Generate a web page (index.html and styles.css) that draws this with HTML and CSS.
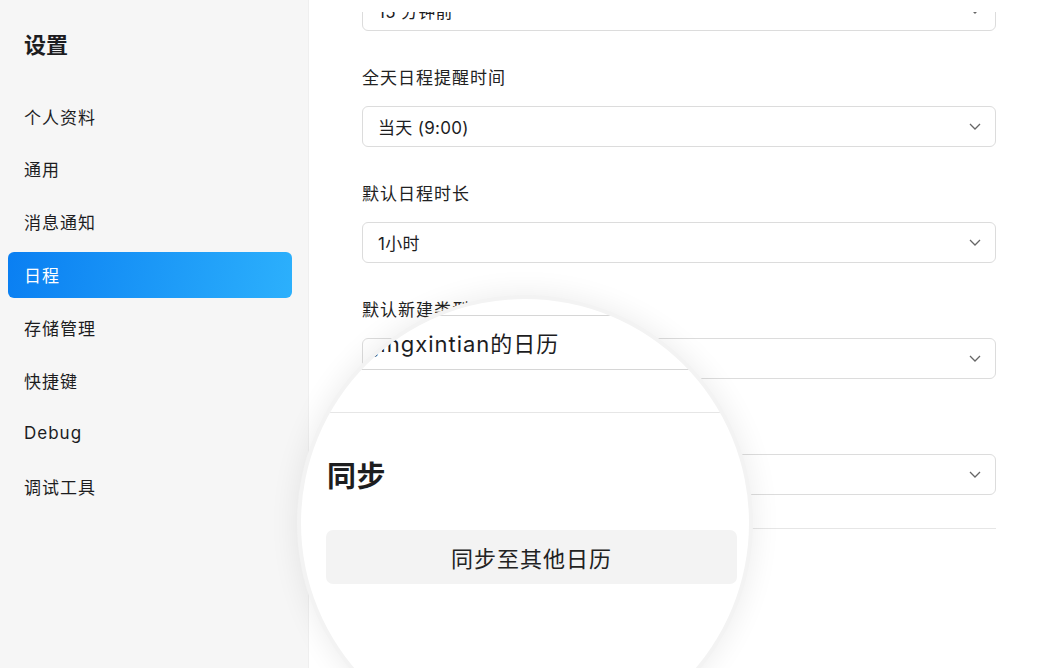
FILE: index.html
```html
<!DOCTYPE html>
<html lang="zh-CN">
<head>
  <meta charset="UTF-8" />
  <meta name="viewport" content="width=device-width, initial-scale=1.0" />
  <title>设置</title>
  <link rel="stylesheet" href="styles.css">
</head>
<body>
  <div class="app">
    <div class="sidebar">
      <h2>设置</h2>
      <a class="nav-item">个人资料</a>
      <a class="nav-item">通用</a>
      <a class="nav-item">消息通知</a>
      <a class="nav-item active">日程</a>
      <a class="nav-item">存储管理</a>
      <a class="nav-item">快捷键</a>
      <a class="nav-item">Debug</a>
      <a class="nav-item">调试工具</a>
    </div>

    <div class="content">
      <div class="titlebar"></div>
      <div class="field first">
        <div class="select"><span>15 分钟前</span><svg viewBox="0 0 12 7"><path d="M1 1l5 5 5-5"/></svg></div>
      </div>
      <div class="field">
        <label>全天日程提醒时间</label>
        <div class="select"><span>当天 (9:00)</span><svg viewBox="0 0 12 7"><path d="M1 1l5 5 5-5"/></svg></div>
      </div>
      <div class="field">
        <label>默认日程时长</label>
        <div class="select"><span>1小时</span><svg viewBox="0 0 12 7"><path d="M1 1l5 5 5-5"/></svg></div>
      </div>
      <div class="field">
        <label>默认新建类型</label>
        <div class="select"><span>jingxintian的日历</span><svg viewBox="0 0 12 7"><path d="M1 1l5 5 5-5"/></svg></div>
      </div>
      <div class="field">
        <label>默认日历</label>
        <div class="select"><span>jingxintian的日历</span><svg viewBox="0 0 12 7"><path d="M1 1l5 5 5-5"/></svg></div>
      </div>
      <div class="divider"></div>
    </div>
  </div>

  <!-- Lupe über dem Inhalt -->
  <div class="lens">
    <div class="lens-content">
      <div class="lens-select">jingxintian的日历</div>
      <div class="lens-divider"></div>
      <h3>同步</h3>
      <button class="lens-button">同步至其他日历</button>
    </div>
  </div>
</body>
</html>
```

FILE: styles.css
```css
body {
  margin: 0;
  padding: 0;
  font-family: 'Inter', 'Noto Sans CJK SC', sans-serif;
  color: #1d1d1f;
  background: #fff;
  height: 668px;
  overflow: hidden;
}

.app {
  display: flex;
  height: 100%;
}

/* Seitenleiste */
.sidebar {
  width: 284px;
  flex-shrink: 0;
  background: #f6f6f6;
  padding: 0 16px 0 8px;
  border-right: 1px solid #efefef;
}

.sidebar h2 {
  margin: 29px 0 32px 16px;
  font-size: 22px;
  line-height: 32px;
  font-weight: 700;
  color: #1d1d1f;
}

.nav-item {
  display: flex;
  align-items: center;
  height: 46px;
  margin-bottom: 6.86px;
  padding-left: 16px;
  font-size: 17px;
  letter-spacing: 1px;
  color: #1d1d1f;
  border-radius: 6px;
}

.nav-item.active {
  background: linear-gradient(100deg, #0a7ff2, #2cb0fc);
  color: #fff;
}

/* Inhalt */
.content {
  flex: 1;
  padding: 0 53px;
}

/* Streifen oben, unter dem der Inhalt verschwindet */
.titlebar {
  position: fixed;
  top: 0;
  left: 309px;
  right: 0;
  height: 12px;
  background: #fff;
  z-index: 5;
}

.field {
  margin-bottom: 36px;
}

.field.first {
  margin-top: -10px;
}

.field label {
  display: block;
  font-size: 17px;
  letter-spacing: 1px;
  line-height: 22px;
  color: #222;
  margin-bottom: 17px;
}

.select {
  height: 39px;
  border: 1px solid #dcdcdc;
  border-radius: 6px;
  display: flex;
  align-items: center;
  justify-content: space-between;
  padding: 0 14px 0 15px;
  font-size: 17px;
  letter-spacing: 0.3px;
  color: #1d1d1f;
}

.select svg {
  width: 12px;
  height: 7px;
  fill: none;
  stroke: #666;
  stroke-width: 1.3;
}

.divider {
  height: 1px;
  background: #e6e6e6;
  margin-top: -3px;
}

/* Lupe */
.lens {
  position: absolute;
  left: 301px;
  top: 299px;
  width: 448px;
  height: 448px;
  border-radius: 50%;
  overflow: hidden;
  background: #fff;
  z-index: 10;
  box-shadow: 0 0 0 4px #f3f3f3, 0 0 28px 6px rgba(0, 0, 0, 0.07);
}

.lens-content {
  display: flex;
  flex-direction: column;
  padding: 16px 0 0 25px;
  width: 411px;
}

.lens-select {
  height: 51px;
  margin-left: -60px;
  width: 600px;
  border: 1px solid #d6d6d6;
  border-radius: 8px;
  display: flex;
  align-items: center;
  padding-left: 107px;
  padding-bottom: 2px;
  font-size: 22px;
  letter-spacing: 1px;
  white-space: nowrap;
  color: #1d1d1f;
}

.lens-divider {
  height: 1px;
  background: #e6e6e6;
  margin: 42px 0 0 -60px;
  width: 600px;
}

.lens-content h3 {
  margin: 44px 0 0 1px;
  font-size: 29px;
  line-height: 40px;
  font-weight: 700;
  letter-spacing: 0.5px;
  color: #1d1d1f;
}

.lens-button {
  margin-top: 33px;
  height: 54px;
  width: 411px;
  border: none;
  border-radius: 7px;
  background: #f3f3f3;
  font-family: inherit;
  font-size: 22px;
  color: #222;
  letter-spacing: 1px;
}
```
